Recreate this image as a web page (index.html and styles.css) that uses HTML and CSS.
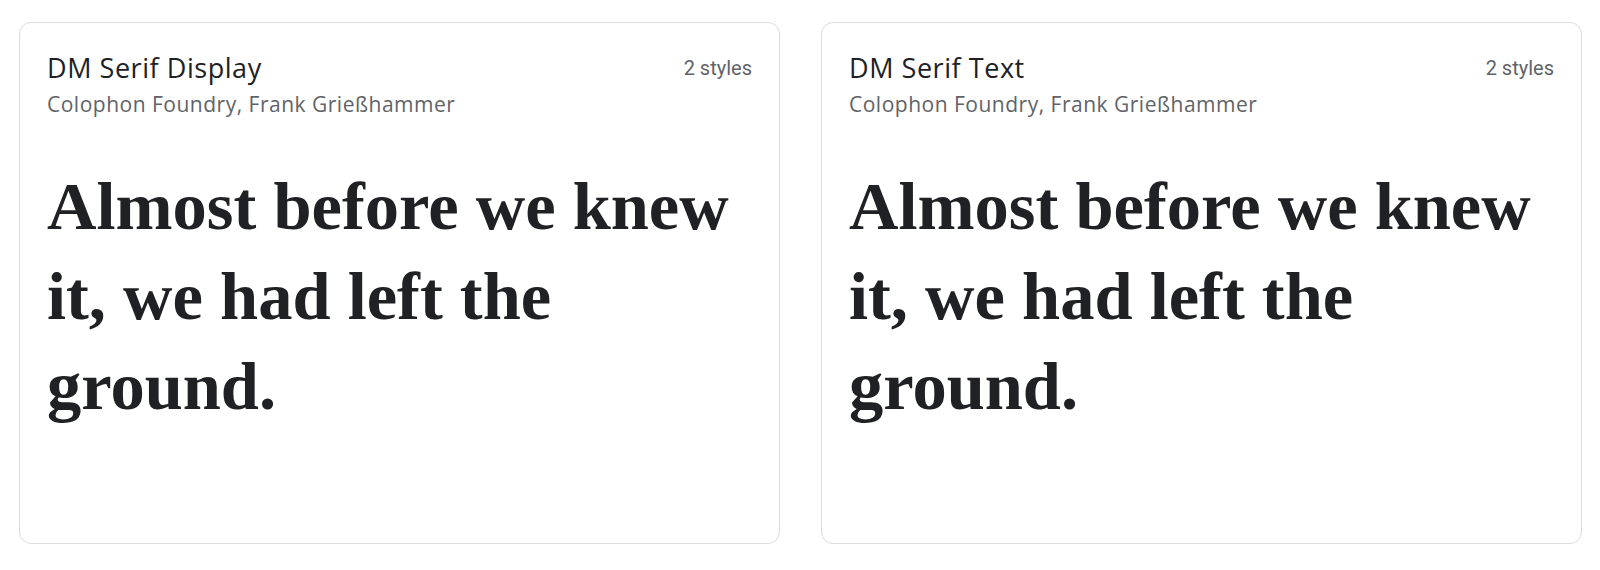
FILE: index.html
```html
<!DOCTYPE html>
<html lang="en">
<head>
<meta charset="utf-8">
<title>Fonts</title>
<link rel="stylesheet" href="styles.css">
</head>
<body>
<main class="grid">
  <article class="card">
    <header class="card-head">
      <div class="meta">
        <h2 class="family">DM Serif Display</h2>
        <p class="designer">Colophon Foundry, Frank Grießhammer</p>
      </div>
      <span class="styles">2 styles</span>
    </header>
    <p class="sample">Almost before we knew<br>it, we had left the<br>ground.</p>
  </article>
  <article class="card">
    <header class="card-head">
      <div class="meta">
        <h2 class="family">DM Serif Text</h2>
        <p class="designer">Colophon Foundry, Frank Grießhammer</p>
      </div>
      <span class="styles">2 styles</span>
    </header>
    <p class="sample">Almost before we knew<br>it, we had left the<br>ground.</p>
  </article>
</main>
</body>
</html>
```
FILE: styles.css
```css
html, body {
  margin: 0;
  padding: 0;
  background: #ffffff;
}

.grid {
  display: grid;
  grid-template-columns: 1fr 1fr;
  column-gap: 41px;
  padding: 22px 18px 0 19px;
}

.card {
  box-sizing: border-box;
  height: 522px;
  border: 1px solid #dadce0;
  border-radius: 12px;
  padding: 29px 27px 0 27px;
  background: #fff;
}

.card-head {
  display: flex;
  justify-content: space-between;
  align-items: flex-start;
}

.family {
  margin: 0;
  font-family: "Open Sans", sans-serif;
  font-weight: 400;
  font-size: 27px;
  line-height: 32px;
  color: #202124;
  letter-spacing: 0.55px;
}

.designer {
  margin: 6px 0 0 0;
  font-family: "Open Sans", sans-serif;
  font-size: 21px;
  line-height: 28px;
  color: #5f6368;
  letter-spacing: 0.5px;
}

.styles {
  font-family: Roboto, "Open Sans", sans-serif;
  font-size: 20px;
  line-height: 28px;
  color: #5f6368;
  margin-top: 2px;
}

.sample {
  margin: 43px 0 0 0;
  font-family: "Liberation Serif", serif;
  font-weight: 700;
  font-size: 68.5px;
  line-height: 90px;
  color: #202124;
}
```
